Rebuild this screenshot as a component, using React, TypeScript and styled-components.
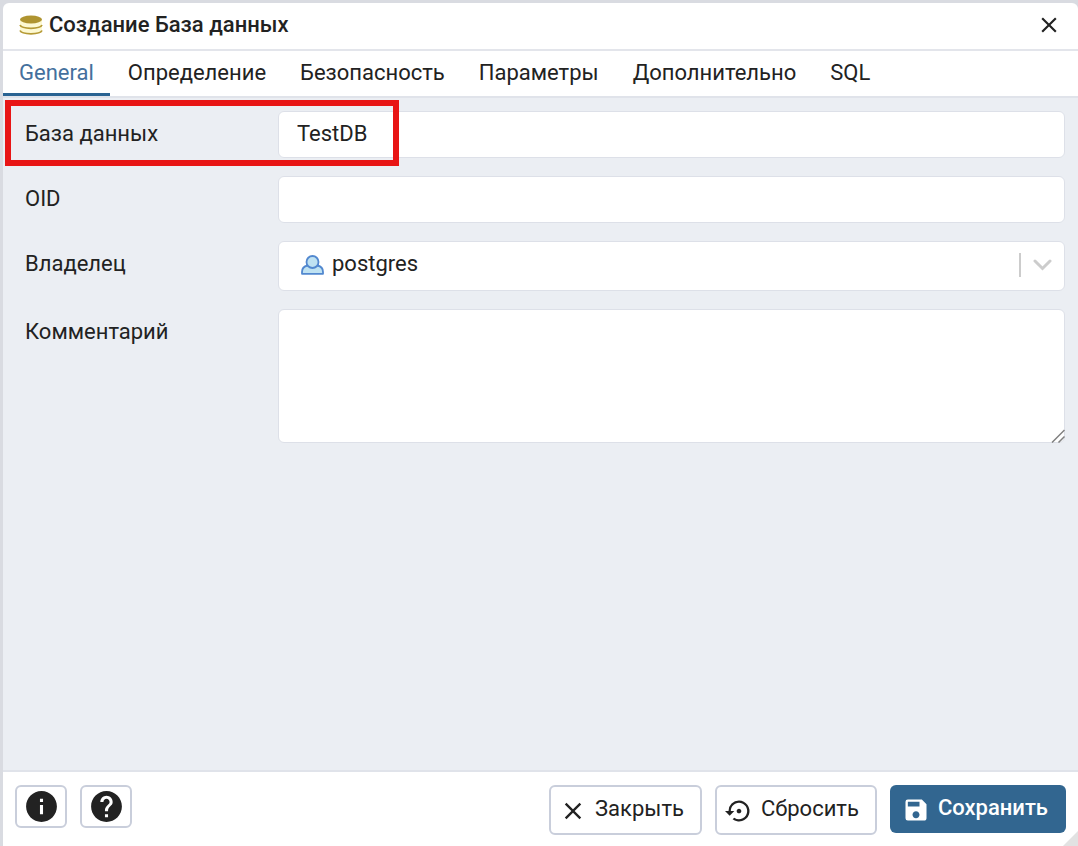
import React, { useState } from "react";
import styled, { createGlobalStyle, css } from "styled-components";
import { MdClose, MdHelp, MdInfo, MdSave, MdSettingsBackupRestore } from "react-icons/md";

const GlobalStyle = createGlobalStyle`
  *, *::before, *::after { box-sizing: border-box; }
  body {
    margin: 0;
    background: #d9dbe1;
    color: #222222;
    font-family: Roboto, "Liberation Sans", sans-serif;
    font-size: 22px;
  }
  button, input, select, textarea { font: inherit; color: inherit; }
`;

const Page = styled.div`
  display: flex;
  min-height: 100vh;
  padding: 3px 0 0 3px;
`;

const Dialog = styled.section`
  position: relative;
  display: flex;
  flex: 1;
  flex-direction: column;
  min-width: 0;
  overflow: hidden;
  background: #ffffff;
  border-radius: 6px 6px 0 0;
`;

const Header = styled.header`
  display: flex;
  align-items: center;
  height: 48px;
  padding: 0 16px 2px;
  border-bottom: 2px solid #e3e5eb;
`;

const Title = styled.h1`
  flex: 1;
  margin: 0 0 0 6px;
  font-size: 22px;
  font-weight: 500;
  line-height: 28px;
`;

const CloseIconButton = styled.button`
  display: flex;
  padding: 0;
  border: 0;
  background: none;
  font-size: 26px;
`;

const Tabs = styled.div`
  display: flex;
  gap: 2px;
  height: 47px;
  border-bottom: 2px solid #e0e3ea;
`;

const Tab = styled.button<{ $active: boolean }>`
  padding: 2px 16px 0;
  border: 0;
  border-bottom: 3px solid ${(p) => (p.$active ? "#2a6392" : "transparent")};
  background: none;
  color: ${(p) => (p.$active ? "#44709d" : "#222222")};
  line-height: 28px;
  white-space: nowrap;
`;

const Form = styled.form`
  display: flex;
  flex: 1;
  flex-direction: column;
  gap: 18px;
  padding: 13px 13px 18px 22px;
  background: #ebeef3;
`;

const Row = styled.div`
  position: relative;
  display: grid;
  grid-template-columns: 253px minmax(0, 1fr);
  align-items: start;
`;

const Label = styled.label`
  line-height: 46px;
`;

const Field = styled.div`
  position: relative;
  display: flex;
`;

const control = css`
  width: 100%;
  border: 1px solid #dde0e8;
  border-radius: 6px;
  background: #ffffff;
  outline: none;
`;

const Input = styled.input`
  ${control}
  height: 47px;
  padding: 0 18px 2px;
`;

const Select = styled.select`
  ${control}
  height: 50px;
  padding: 0 60px 6px 53px;
  appearance: none;
`;

const TextArea = styled.textarea`
  ${control}
  height: 134px;
  padding: 10px 18px;
  resize: none;
`;

const UserMark = styled.span`
  position: absolute;
  top: 14px;
  left: 23px;
  display: flex;
  pointer-events: none;
`;

const Arrow = styled.span`
  position: absolute;
  top: 12px;
  right: 13px;
  display: flex;
  align-items: center;
  height: 24px;
  padding-left: 12px;
  border-left: 2px solid #cccccc;
  pointer-events: none;
`;

const Grip = styled.span`
  position: absolute;
  right: 0;
  bottom: 0;
  display: flex;
  pointer-events: none;
`;

const Highlight = styled.span`
  position: absolute;
  top: -11px;
  left: -20px;
  width: 394px;
  height: 66px;
  border: 6px solid #e81515;
  pointer-events: none;
`;

const Footer = styled.footer`
  display: flex;
  align-items: flex-start;
  gap: 13px;
  padding: 13px 12px 11px;
  border-top: 2px solid #e0e3ea;
`;

const Spacer = styled.span`
  flex: 1;
`;

const IconButton = styled.button`
  display: flex;
  align-items: center;
  justify-content: center;
  width: 52px;
  height: 43px;
  padding: 0;
  border: 2px solid #c9cedb;
  border-radius: 6px;
  background: #ffffff;
  font-size: 37px;
`;

const ActionButton = styled.button<{ $primary?: boolean }>`
  display: flex;
  align-items: center;
  gap: 8px;
  height: ${(p) => (p.$primary ? "48px" : "50px")};
  padding: ${(p) => (p.$primary ? "0 18px 0 12px" : "0 16px 0 8px")};
  border: ${(p) => (p.$primary ? "0" : "2px solid #c9cedb")};
  border-radius: 6px;
  background: ${(p) => (p.$primary ? "#326690" : "#ffffff")};
  color: ${(p) => (p.$primary ? "#ffffff" : "#222222")};
  font-weight: ${(p) => (p.$primary ? 500 : 400)};
  white-space: nowrap;

  svg { width: 28px; height: 28px; margin-top: 2px; }
  span { line-height: 28px; padding-bottom: 2px; }
`;

const Corner = styled.span`
  position: absolute;
  right: 0;
  bottom: 0;
  display: flex;
`;

const DatabaseIcon = () => (
  <svg width="24" height="20" viewBox="0 0 24 20" aria-hidden="true">
    <path d="M1 4v11.500c0 2 5 3.500 11 3.500s11-1.500 11-3.500V4z" fill="#fdf9d2" />
    <path d="M1 15.500c1 2.200 5.500 3.300 11 3.300s10-1.100 11-3.300M1 10c1 2.200 5.500 3.300 11 3.300s10-1.100 11-3.300" fill="none" stroke="#b59a35" strokeWidth="1.800" />
    <ellipse cx="12" cy="4.500" rx="11" ry="4" fill="#af9430" />
  </svg>
);

const UserIcon = () => (
  <svg width="23" height="20" viewBox="0 0 23 20" aria-hidden="true">
    <path d="M1 18.800v-1.800c0-3.500 2-5.800 5.500-6.500h10c3.500 .7 5.500 3 5.500 6.500v1.800z" fill="#bfe2f2" stroke="#5288cf" strokeWidth="1.800" strokeLinejoin="round" />
    <circle cx="11.500" cy="7" r="6" fill="#bfe2f2" stroke="#5288cf" strokeWidth="1.800" />
  </svg>
);

const tabs = ["General", "Определение", "Безопасность", "Параметры", "Дополнительно", "SQL"];

export default function App() {
  const [active, setActive] = useState("General");
  const [name, setName] = useState("TestDB");

  return (
    <>
      <GlobalStyle />
      <Page>
        <Dialog role="dialog" aria-labelledby="dialog-title">
          <Header>
            <DatabaseIcon />
            <Title id="dialog-title">Создание База данных</Title>
            <CloseIconButton type="button" aria-label="Закрыть">
              <MdClose />
            </CloseIconButton>
          </Header>
          <Tabs role="tablist">
            {tabs.map((tab) => (
              <Tab
                key={tab}
                type="button"
                role="tab"
                aria-selected={tab === active}
                $active={tab === active}
                onClick={() => setActive(tab)}
              >
                {tab}
              </Tab>
            ))}
          </Tabs>
          <Form id="database-form" onSubmit={(e) => e.preventDefault()}>
            <Row>
              <Label htmlFor="database">База данных</Label>
              <Field>
                <Input id="database" value={name} onChange={(e) => setName(e.target.value)} />
              </Field>
              <Highlight />
            </Row>
            <Row>
              <Label htmlFor="oid">OID</Label>
              <Field>
                <Input id="oid" />
              </Field>
            </Row>
            <Row>
              <Label htmlFor="owner">Владелец</Label>
              <Field>
                <Select id="owner" defaultValue="postgres">
                  <option value="postgres">postgres</option>
                </Select>
                <UserMark>
                  <UserIcon />
                </UserMark>
                <Arrow>
                  <svg width="19" height="12" viewBox="0 0 19 12" aria-hidden="true">
                    <path d="M2 2l7.500 7.500L17 2" fill="none" stroke="#cccccc" strokeWidth="3" strokeLinecap="round" />
                  </svg>
                </Arrow>
              </Field>
            </Row>
            <Row>
              <Label htmlFor="comment">Комментарий</Label>
              <Field>
                <TextArea id="comment" />
                <Grip>
                  <svg width="14" height="14" viewBox="0 0 14 14" aria-hidden="true">
                    <path d="M1 13.500L13.500 1M7.500 13.500l6-6" fill="none" stroke="#808080" strokeWidth="1.500" />
                  </svg>
                </Grip>
              </Field>
            </Row>
          </Form>
          <Footer>
            <IconButton type="button" aria-label="Информация">
              <MdInfo />
            </IconButton>
            <IconButton type="button" aria-label="Справка">
              <MdHelp />
            </IconButton>
            <Spacer />
            <ActionButton type="button">
              <MdClose />
              <span>Закрыть</span>
            </ActionButton>
            <ActionButton type="reset" form="database-form">
              <MdSettingsBackupRestore />
              <span>Сбросить</span>
            </ActionButton>
            <ActionButton type="submit" form="database-form" $primary>
              <MdSave />
              <span>Сохранить</span>
            </ActionButton>
          </Footer>
          <Corner>
            <svg width="16" height="15" viewBox="0 0 16 15" aria-hidden="true">
              <path d="M16 0v15H1z" fill="#e2e2e2" />
            </svg>
          </Corner>
        </Dialog>
      </Page>
    </>
  );
}
